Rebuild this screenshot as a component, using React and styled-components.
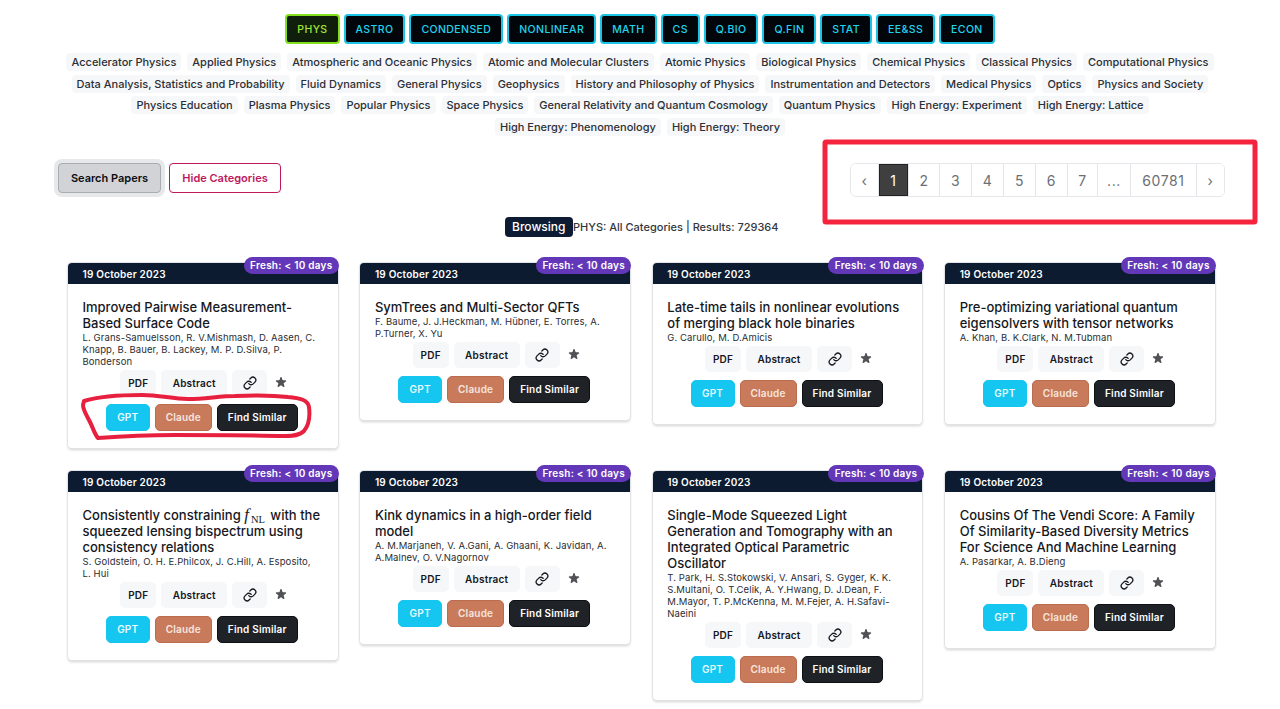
import React from "react";
import styled, { createGlobalStyle } from "styled-components";
import { HiStar } from "react-icons/hi";
import { Link as LinkIcon } from "lucide-react";

const Global = createGlobalStyle`
  html, body { margin: 0; padding: 0; background: #fff; }
  body { font-family: Inter, "Noto Sans", sans-serif; color: #111827; -webkit-font-smoothing: antialiased; }
`;

const Page = styled.div`
  position: relative;
  width: 1280px;
  height: 709px;
  overflow: hidden;
  padding-top: 14px;
  box-sizing: border-box;
`;
const Tabs = styled.div`
  display: flex;
  justify-content: center;
  gap: 4px;
`;
const Tab = styled.button`
  height: 30px;
  box-sizing: border-box;
  padding: 0 10px;
  border-radius: 4px;
  border: 2px solid ${p => (p.$active ? "#84e01a" : "#1cc4e6")};
  background: ${p => (p.$active ? "#0f1f0c" : "#02060a")};
  color: ${p => (p.$active ? "#a3e635" : "#22d3ee")};
  font: 500 10.5px Inter, sans-serif;
  letter-spacing: 0.4px;
`;
const Chips = styled.div`
  display: flex;
  flex-wrap: wrap;
  justify-content: center;
  gap: 3.5px 6px;
  width: 1170px;
  margin: 9px auto 0;
`;
const Chip = styled.span`
  height: 18px;
  line-height: 18px;
  padding: 0 5px;
  border-radius: 4px;
  background: #f6f7f9;
  color: #2b2f36;
  font-size: 11px;
  font-weight: 500;
  white-space: nowrap;
`;
const Controls = styled.div`
  display: flex;
  align-items: flex-start;
  justify-content: space-between;
  margin-top: 27px;
  padding: 0 55px 0 58px;
`;
const Actions = styled.div`
  display: flex;
  gap: 8px;
`;
const SearchButton = styled.button`
  width: 103px;
  height: 30px;
  box-sizing: border-box;
  border-radius: 4px;
  border: 1px solid #a8acb3;
  background: #d1d3d7;
  box-shadow: 0 0 0 4px #e7e8ea;
  color: #0b0d12;
  font: 600 11px Inter, sans-serif;
`;
const HideButton = styled.button`
  width: 112px;
  height: 30px;
  box-sizing: border-box;
  border-radius: 4px;
  border: 1px solid #be185d;
  background: #fff;
  color: #be185d;
  font: 600 11px Inter, sans-serif;
`;
const Pagination = styled.div`
  display: flex;
  height: 34px;
  box-sizing: border-box;
  border: 1px solid #e5e7eb;
  border-radius: 6px;
  overflow: hidden;
`;
const PageItem = styled.span`
  width: ${p => p.$w}px;
  display: flex;
  align-items: center;
  justify-content: center;
  box-sizing: border-box;
  padding-top: 1px;
  border-left: ${p => (p.$first ? "none" : "1px solid #e5e7eb")};
  background: ${p => (p.$active ? "#3f3f3f" : "#fff")};
  color: ${p => (p.$active ? "#fff" : "#6b6f76")};
  box-shadow: ${p => (p.$active ? "inset 0 0 0 1px #222" : "none")};
  font-size: 14px;
  letter-spacing: 0.6px;
`;
const Status = styled.div`
  display: flex;
  justify-content: center;
  align-items: center;
  margin: 20px 0 0 3px;
  font-size: 11px;
  font-weight: 500;
  color: #33373d;
`;
const StatusTag = styled.span`
  height: 20px;
  line-height: 20px;
  padding: 0 7.5px;
  border-radius: 4px;
  background: #0d1b33;
  color: #fff;
  font-size: 12px;
`;
const Grid = styled.div`
  display: grid;
  grid-template-columns: repeat(4, 269.5px);
  column-gap: 22.9px;
  row-gap: 23px;
  align-items: start;
  margin: 26px 0 0 68px;
`;
const Card = styled.article`
  position: relative;
  border-radius: 4px;
  background: #fff;
  box-shadow: 0 0 0 1px #e2e3e6, 0 2px 3px rgba(0, 0, 0, 0.18);
`;
const CardHead = styled.header`
  height: 21px;
  line-height: 22px;
  padding-left: 14.5px;
  border-radius: 4px 4px 0 0;
  background: #0c1b30;
  color: #fff;
  font-size: 10px;
  font-weight: 600;
  letter-spacing: 0.2px;
`;
const Fresh = styled.span`
  position: absolute;
  top: -6px;
  right: -1.5px;
  height: 17px;
  line-height: 17px;
  padding: 0 6.5px;
  border-radius: 9px;
  background: #6338b8;
  color: #fff;
  font-size: 10px;
  font-weight: 600;
  letter-spacing: 0.25px;
`;
const CardBody = styled.div`
  padding: 15px 14.5px 17px 14.5px;
`;
const Title = styled.h3`
  margin: 0;
  font-size: 13px;
  line-height: 16px;
  font-weight: 500;
  color: #15181e;
`;
const MathText = styled.span`
  font-family: "Liberation Serif", serif;
  line-height: 0;
  i { font-size: 17px; line-height: 0; }
  sub { font-size: 10.5px; line-height: 0; margin: 0 2px 0 2px; }
`;
const Authors = styled.p`
  margin: 0;
  padding: 1px 2px 0 0;
  font-size: 9.5px;
  line-height: 12px;
  color: #2a2d33;
  letter-spacing: 0.1px;
`;
const LinkRow = styled.div`
  display: flex;
  justify-content: center;
  align-items: center;
  gap: 5px;
  margin-top: 2px;
  padding-left: 3px;
`;
const LinkButton = styled.span`
  width: ${p => p.$w}px;
  height: 26px;
  display: flex;
  align-items: center;
  justify-content: center;
  border-radius: 5px;
  background: #f6f7f9;
  color: #15181e;
  font-size: 10px;
  font-weight: 600;
  letter-spacing: 0.2px;
`;
const StarBox = styled.span`
  width: 14px;
  margin-left: 2px;
  display: flex;
  justify-content: center;
  color: #505256;
`;
const AiRow = styled.div`
  display: flex;
  justify-content: center;
  gap: 5px;
  margin-top: 8px;
  padding-right: 2px;
`;
const AiButton = styled.span`
  width: ${p => p.$w}px;
  height: 27px;
  box-sizing: border-box;
  display: flex;
  align-items: center;
  justify-content: center;
  border-radius: 5px;
  border: 1px solid ${p => p.$edge};
  background: ${p => p.$bg};
  color: ${p => p.$fg};
  font-size: 10px;
  font-weight: 600;
  letter-spacing: 0.2px;
`;
const Overlay = styled.svg`
  position: absolute;
  inset: 0;
  width: 1280px;
  height: 709px;
  pointer-events: none;
`;

const tabs = ["PHYS", "ASTRO", "CONDENSED", "NONLINEAR", "MATH", "CS", "Q.BIO", "Q.FIN", "STAT", "EE&SS", "ECON"];
const chips = ["Accelerator Physics", "Applied Physics", "Atmospheric and Oceanic Physics", "Atomic and Molecular Clusters", "Atomic Physics", "Biological Physics", "Chemical Physics", "Classical Physics", "Computational Physics", "Data Analysis, Statistics and Probability", "Fluid Dynamics", "General Physics", "Geophysics", "History and Philosophy of Physics", "Instrumentation and Detectors", "Medical Physics", "Optics", "Physics and Society", "Physics Education", "Plasma Physics", "Popular Physics", "Space Physics", "General Relativity and Quantum Cosmology", "Quantum Physics", "High Energy: Experiment", "High Energy: Lattice", "High Energy: Phenomenology", "High Energy: Theory"];
const pages = [["‹", 27], ["1", 30], ["2", 31], ["3", 32], ["4", 32], ["5", 32], ["6", 32], ["7", 30], ["...", 33], ["60781", 66], ["›", 28]];

const fnl = (
  <>Consistently constraining <MathText><i>f</i><sub>NL</sub></MathText> with the squeezed lensing bispectrum using consistency relations</>
);
const papers = [
  { t: "Improved Pairwise Measurement-Based Surface Code", a: "L. Grans-Samuelsson, R. V.Mishmash, D. Aasen, C. Knapp, B. Bauer, B. Lackey, M. P. D.Silva, P. Bonderson" },
  { t: "SymTrees and Multi-Sector QFTs", a: "F. Baume, J. J.Heckman, M. Hübner, E. Torres, A. P.Turner, X. Yu" },
  { t: "Late-time tails in nonlinear evolutions of merging black hole binaries", a: "G. Carullo, M. D.Amicis" },
  { t: "Pre-optimizing variational quantum eigensolvers with tensor networks", a: "A. Khan, B. K.Clark, N. M.Tubman" },
  { t: fnl, a: "S. Goldstein, O. H. E.Philcox, J. C.Hill, A. Esposito, L. Hui" },
  { t: "Kink dynamics in a high-order field model", a: "A. M.Marjaneh, V. A.Gani, A. Ghaani, K. Javidan, A. A.Malnev, O. V.Nagornov" },
  { t: "Single-Mode Squeezed Light Generation and Tomography with an Integrated Optical Parametric Oscillator", a: "T. Park, H. S.Stokowski, V. Ansari, S. Gyger, K. K. S.Multani, O. T.Celik, A. Y.Hwang, D. J.Dean, F. M.Mayor, T. P.McKenna, M. M.Fejer, A. H.Safavi-Naeini" },
  { t: "Cousins Of The Vendi Score: A Family Of Similarity-Based Diversity Metrics For Science And Machine Learning", a: "A. Pasarkar, A. B.Dieng" },
];

const Paper = ({ t, a }) => (
  <Card>
    <CardHead>19 October 2023</CardHead>
    <Fresh>Fresh: &lt; 10 days</Fresh>
    <CardBody>
      <Title>{t}</Title>
      <Authors>{a}</Authors>
      <LinkRow>
        <LinkButton $w={36}>PDF</LinkButton>
        <LinkButton $w={66}>Abstract</LinkButton>
        <LinkButton $w={35}><LinkIcon size={14} strokeWidth={2.2} /></LinkButton>
        <StarBox><HiStar size={17} /></StarBox>
      </LinkRow>
      <AiRow>
        <AiButton $w={44} $bg="#14c6f0" $edge="#14c6f0" $fg="#e9fbff">GPT</AiButton>
        <AiButton $w={57} $bg="#c97a5b" $edge="#b96c4e" $fg="#f7e6de">Claude</AiButton>
        <AiButton $w={81} $bg="#1f2328" $edge="#0e1013" $fg="#fff">Find Similar</AiButton>
      </AiRow>
    </CardBody>
  </Card>
);

export default function App() {
  return (
    <Page>
      <Global />
      <Tabs>
        {tabs.map((t, i) => <Tab key={t} $active={i === 0}>{t}</Tab>)}
      </Tabs>
      <Chips>
        {chips.map(c => <Chip key={c}>{c}</Chip>)}
      </Chips>
      <Controls>
        <Actions>
          <SearchButton>Search Papers</SearchButton>
          <HideButton>Hide Categories</HideButton>
        </Actions>
        <Pagination>
          {pages.map(([p, w], i) => (
            <PageItem key={p} $w={w} $first={i === 0} $active={p === "1"}>{p}</PageItem>
          ))}
        </Pagination>
      </Controls>
      <Status>
        <StatusTag>Browsing</StatusTag>
        PHYS: All Categories | Results: 729364
      </Status>
      <Grid>
        {papers.map((p, i) => <Paper key={i} {...p} />)}
      </Grid>
      <Overlay viewBox="0 0 1280 709">
        <rect x="825" y="142" width="430" height="80" rx="1" fill="none" stroke="#f4243f" strokeWidth="5" />
        <path d="M84 401 C100 396 125 395 142 395 C160 395 172 399 188 399 C205 399 220 396 235 396 C255 395 272 395 288 397 C300 398 308 400 309 407 C310 415 309 425 304 431 C300 435 295 436 285 436 C250 435 210 435 175 435 C150 435 125 436 98 438 C95 435 93 428 90 422 C87 416 83 410 83 405 Z" fill="none" stroke="#e8203f" strokeWidth="4" strokeLinejoin="round" />
      </Overlay>
    </Page>
  );
}
